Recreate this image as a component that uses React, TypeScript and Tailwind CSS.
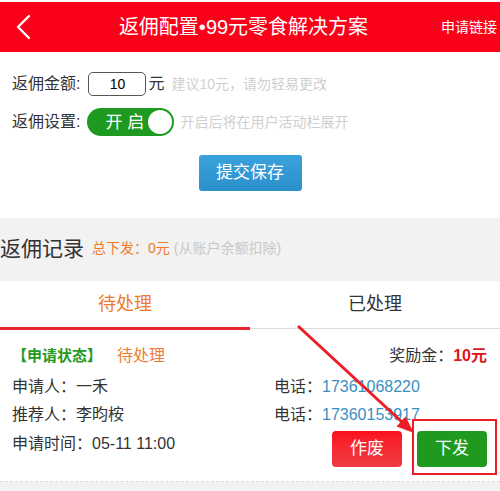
import React from "react";

export default function App() {
  return (
    <div
      className="relative w-[500px] h-[491px] overflow-hidden bg-[#f2f2f2]"
      style={{ fontFamily: '"Liberation Sans", "Noto Sans CJK SC", sans-serif' }}
    >
      {/* top white + header */}
      <div className="bg-white pt-[2px]">
        <div className="flex items-center h-[50px] bg-[#fb0019] text-white">
          <div className="pl-[15px] flex items-center">
            <svg width="16" height="26" viewBox="0 0 16 26">
              <path d="M14 2 L3 13 L14 24" fill="none" stroke="white" strokeWidth="2.4" strokeLinecap="round" strokeLinejoin="round" />
            </svg>
          </div>
          <div className="flex-1 text-center pl-[15px] text-[20px] leading-none">返佣配置•99元零食解决方案</div>
          <div className="pr-[3px] text-[14px] leading-none">申请链接</div>
        </div>
      </div>

      {/* settings */}
      <div className="bg-white pt-[20px] pb-[27px] text-[#333]">
        <div className="flex items-center pl-[12px] h-[24px]">
          <span className="text-[16px]">返佣金额:</span>
          <div className="ml-[8px] w-[58px] h-[24px] rounded-[5px] border-[1.5px] border-[#555] flex items-center justify-center text-[14px] text-black">10</div>
          <span className="ml-[2px] text-[16px]">元</span>
          <span className="ml-[7px] text-[14px] text-[#cfcfcf]">建议10元，请勿轻易更改</span>
        </div>
        <div className="flex items-center pl-[12px] mt-[12px] h-[28px]">
          <span className="text-[16px]">返佣设置:</span>
          <div className="ml-[7px] w-[87px] h-[28px] rounded-full bg-[#1d9a1f] flex items-center justify-between pl-[18px] pr-[2px]">
            <span className="text-white text-[17px] leading-none">开 启</span>
            <span className="w-[24px] h-[24px] rounded-full bg-white block" />
          </div>
          <span className="ml-[6px] text-[14px] text-[#cfcfcf]">开启后将在用户活动栏展开</span>
        </div>
        <div className="flex justify-center mt-[19px]">
          <div className="w-[103px] h-[36px] rounded-[3px] bg-gradient-to-b from-[#3aa2db] to-[#2b8fcb] text-white text-[17px] flex items-center justify-center">提交保存</div>
        </div>
      </div>

      {/* record header */}
      <div className="h-[63px] flex items-center pb-[2px]">
        <span className="text-[21px] text-[#333]">返佣记录</span>
        <span className="ml-[8px] text-[14px] text-[#f07a2a]">总下发：0元</span>
        <span className="ml-[4px] text-[14px] text-[#c8c8c8]">(从账户余额扣除)</span>
      </div>

      {/* tabs */}
      <div className="bg-white flex h-[49px]">
        <div className="flex-1 flex flex-col">
          <div className="flex-1 flex items-center justify-center text-[18px] text-[#f07a2a]">待处理</div>
          <div className="h-[3px] bg-[#e8262d]" />
        </div>
        <div className="flex-1 flex flex-col">
          <div className="flex-1 flex items-center justify-center text-[18px] text-[#333]">已处理</div>
          <div className="h-[1px] bg-[#dcdcdc] mb-[1px]" />
        </div>
      </div>

      {/* card */}
      <div className="bg-white border-b border-dashed border-[#d8d8d8] h-[152px] flex justify-between pl-[12px] pr-[13px] pt-[14px] text-[16px] text-[#333]">
        <div className="flex flex-col">
          <div className="h-[24px] flex items-center">
            <span className="text-[15px] font-bold text-[#249a25]">【申请状态】</span>
            <span className="ml-[15px] text-[16px] text-[#f07a2a]">待处理</span>
          </div>
          <div className="h-[29px] flex items-center mt-[4px]">申请人：一禾</div>
          <div className="h-[28px] flex items-center">推荐人：李昀桉</div>
          <div className="h-[29px] flex items-center">申请时间：05-11 11:00</div>
        </div>
        <div className="flex flex-col items-end">
          <div className="h-[24px] flex items-center">
            <span>奖励金：</span>
            <span className="font-bold text-[#e0141e]">10元</span>
          </div>
          <div className="w-[213px] mt-[4px]">
            <div className="h-[29px] flex items-center">
              <span>电话：</span>
              <span className="text-[#3a8fc2]">17361068220</span>
            </div>
            <div className="h-[28px] flex items-center">
              <span>电话：</span>
              <span className="text-[#3a8fc2]">17360153917</span>
            </div>
          </div>
          <div className="flex gap-[15px] mt-[2px]">
            <div className="w-[70px] h-[36px] rounded-[4px] bg-gradient-to-b from-[#fb0e1c] to-[#ee3a45] text-white text-[17px] flex items-center justify-center">作废</div>
            <div className="w-[70px] h-[36px] rounded-[4px] bg-[#1f9a1f] text-white text-[17px] flex items-center justify-center">下发</div>
          </div>
        </div>
      </div>

      {/* annotation overlay */}
      <div className="absolute left-[412px] top-[419px] w-[85px] h-[56px] border-2 border-[#ee1c24]" />
      <svg className="absolute left-0 top-0 pointer-events-none" width="500" height="491">
        <line x1="298" y1="326" x2="403" y2="423" stroke="#ee1c24" strokeWidth="3" />
        <polygon points="414,433 396.5,426.5 405.5,416.5" fill="#ee1c24" />
      </svg>
    </div>
  );
}
